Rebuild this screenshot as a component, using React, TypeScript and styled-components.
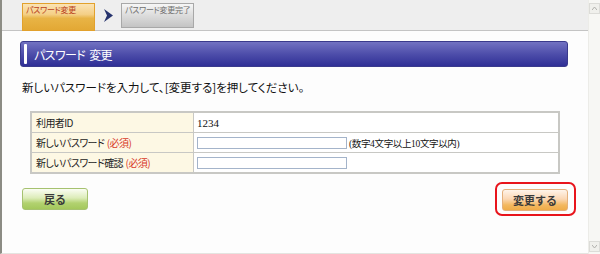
import styled, { createGlobalStyle } from "styled-components";

const GlobalStyle = createGlobalStyle`
  html, body {
    margin: 0;
    padding: 0;
    background: #fdfdfd;
  }
  body {
    font-family: "Noto Sans CJK JP", "Liberation Sans", sans-serif;
    font-feature-settings: "palt";
    color: #111;
  }
`;

const Frame = styled.div`
  display: flex;
  width: 600px;
  height: 254px;
  overflow: hidden;
`;

const Main = styled.div`
  flex: 1;
  display: flex;
  flex-direction: column;
  border-left: 2px solid #8c8c84;
  border-bottom: 1px solid #e4e4e0;
`;

const StepBar = styled.div`
  height: 31px;
  flex-shrink: 0;
  display: flex;
  align-items: flex-start;
  padding: 3px 0 0 20px;
  background: #eeeeee;
  border-bottom: 1px solid #c4c4c4;
  box-sizing: border-box;
`;

const Step = styled.div<{ $active?: boolean }>`
  width: 73px;
  height: ${(p) => (p.$active ? "28px" : "25px")};
  box-sizing: border-box;
  padding: 1px 3px;
  font-size: 8px;
  line-height: 10px;
  white-space: nowrap;
  letter-spacing: -0.3px;
  color: ${(p) => (p.$active ? "#b8401c" : "#707070")};
  border: 1px solid ${(p) => (p.$active ? "#e2a12c" : "#a8a8a8")};
  background: ${(p) =>
    p.$active
      ? "linear-gradient(#fbe3b4 0%, #f4cf86 40%, #e8b446 55%, #e3a834 100%)"
      : "linear-gradient(#f6f6f6 0%, #dcdcdc 50%, #c4c4c4 100%)"};
`;

const ArrowBox = styled.div`
  width: 26px;
  height: 25px;
  display: flex;
  align-items: center;
  justify-content: center;
`;

const Content = styled.div`
  flex: 1;
  padding: 10px 20px 0 18px;
  background: #fdfdfd;
`;

const TitleBar = styled.div`
  height: 26px;
  display: flex;
  align-items: center;
  border-radius: 3px;
  background: linear-gradient(#7272c2 0%, #4e4eaa 50%, #2f2f96 100%);
  border: 1px solid #3a3a8c;
  box-sizing: border-box;
`;

const TitleMark = styled.div`
  width: 3px;
  height: 20px;
  margin-left: 3px;
  background: #ffffff;
  border-radius: 1px;
`;

const TitleText = styled.h1`
  margin: 0 0 0 7px;
  font-size: 12px;
  font-weight: normal;
  color: #ffffff;
  letter-spacing: -0.6px;
  word-spacing: 2px;
`;

const Lead = styled.p`
  margin: 12px 0 0 2px;
  font-size: 11.5px;
  line-height: 16px;
  color: #111;
`;

const Table = styled.table`
  margin: 16px 0 0 10px;
  width: 530px;
  border-collapse: collapse;
  border: 2px solid #c8c8c4;
  font-size: 10px;
  letter-spacing: -0.6px;
`;

const LabelCell = styled.td`
  width: 157px;
  height: 19px;
  padding: 0 0 0 4px;
  background: #fdf8e4;
  border: 1px solid #c8c8c4;
  color: #222;
  white-space: nowrap;
  word-spacing: 1px;
`;

const ValueCell = styled.td`
  height: 19px;
  padding: 0 0 0 3px;
  background: #ffffff;
  border: 1px solid #c8c8c4;
  font-family: "Liberation Serif", "Noto Sans CJK JP", serif;
  font-size: 11px;
  letter-spacing: 0;
  color: #111;
  white-space: nowrap;
`;

const Required = styled.span`
  color: #d83a2a;
`;

const Input = styled.input`
  width: 150px;
  height: 12px;
  box-sizing: border-box;
  margin: 0;
  padding: 0;
  vertical-align: middle;
  border: 1px solid #a4b4ca;
  background: #ffffff;
`;

const Hint = styled.span`
  margin-left: 2px;
  font-size: 9.5px;
  letter-spacing: -0.35px;
  vertical-align: middle;
`;

const ButtonRow = styled.div`
  display: flex;
  justify-content: space-between;
  align-items: center;
  margin: 8px -8px 0 2px;
`;

const Button = styled.button<{ $tone: "green" | "orange" }>`
  width: 66px;
  height: 22px;
  padding: 0;
  border-radius: 3px;
  font-family: "Noto Sans CJK JP", sans-serif;
  font-size: 11px;
  font-weight: bold;
  color: #3a3a3a;
  border: 1px solid ${(p) => (p.$tone === "green" ? "#a6c270" : "#e4b07c")};
  background: ${(p) =>
    p.$tone === "green"
      ? "linear-gradient(#fbfdf4 0%, #dcecb8 45%, #b2d270 70%, #a4c85c 100%)"
      : "linear-gradient(#fff4ea 0%, #fbd7b4 45%, #f3b860 75%, #efac48 100%)"};
`;

const Focus = styled.div`
  padding: 2px 6px 3px 5px;
  border: 2px solid #e8141c;
  border-radius: 7px;
`;

const ScrollBar = styled.div`
  width: 12px;
  display: flex;
  flex-direction: column;
  justify-content: space-between;
  align-items: center;
  padding: 3px 0 2px;
  box-sizing: border-box;
  background: #f7f7f4;
  border-left: 1px solid #ecece8;
`;

const ScrollButton = styled.div`
  width: 9px;
  height: 9px;
  border: 1px solid #dcdcd8;
  background: #f0f0ec;
  display: flex;
  align-items: center;
  justify-content: center;
`;

const App = () => (
  <>
    <GlobalStyle />
    <Frame>
      <Main>
        <StepBar>
          <Step $active>パスワード変更</Step>
          <ArrowBox>
            <svg width="9" height="13" viewBox="0 0 9 13">
              <path d="M0 0 L9 6.5 L0 13 L3 6.5 Z" fill="#27346e" />
            </svg>
          </ArrowBox>
          <Step>パスワード変更完了</Step>
        </StepBar>
        <Content>
          <TitleBar>
            <TitleMark />
            <TitleText>パスワード 変更</TitleText>
          </TitleBar>
          <Lead>新しいパスワードを入力して、[変更する]を押してください。</Lead>
          <Table>
            <tbody>
              <tr>
                <LabelCell>利用者ID</LabelCell>
                <ValueCell>1234</ValueCell>
              </tr>
              <tr>
                <LabelCell>
                  新しいパスワード <Required>(必須)</Required>
                </LabelCell>
                <ValueCell>
                  <Input type="password" />
                  <Hint>(数字4文字以上10文字以内)</Hint>
                </ValueCell>
              </tr>
              <tr>
                <LabelCell>
                  新しいパスワード確認 <Required>(必須)</Required>
                </LabelCell>
                <ValueCell>
                  <Input type="password" />
                </ValueCell>
              </tr>
            </tbody>
          </Table>
          <ButtonRow>
            <Button $tone="green">戻る</Button>
            <Focus>
              <Button $tone="orange">変更する</Button>
            </Focus>
          </ButtonRow>
        </Content>
      </Main>
      <ScrollBar>
        <ScrollButton>
          <svg width="5" height="3" viewBox="0 0 5 3">
            <path d="M0 3 L2.5 0 L5 3" fill="none" stroke="#b0b0ac" />
          </svg>
        </ScrollButton>
        <ScrollButton>
          <svg width="5" height="3" viewBox="0 0 5 3">
            <path d="M0 0 L2.5 3 L5 0" fill="none" stroke="#b0b0ac" />
          </svg>
        </ScrollButton>
      </ScrollBar>
    </Frame>
  </>
);

export default App;
